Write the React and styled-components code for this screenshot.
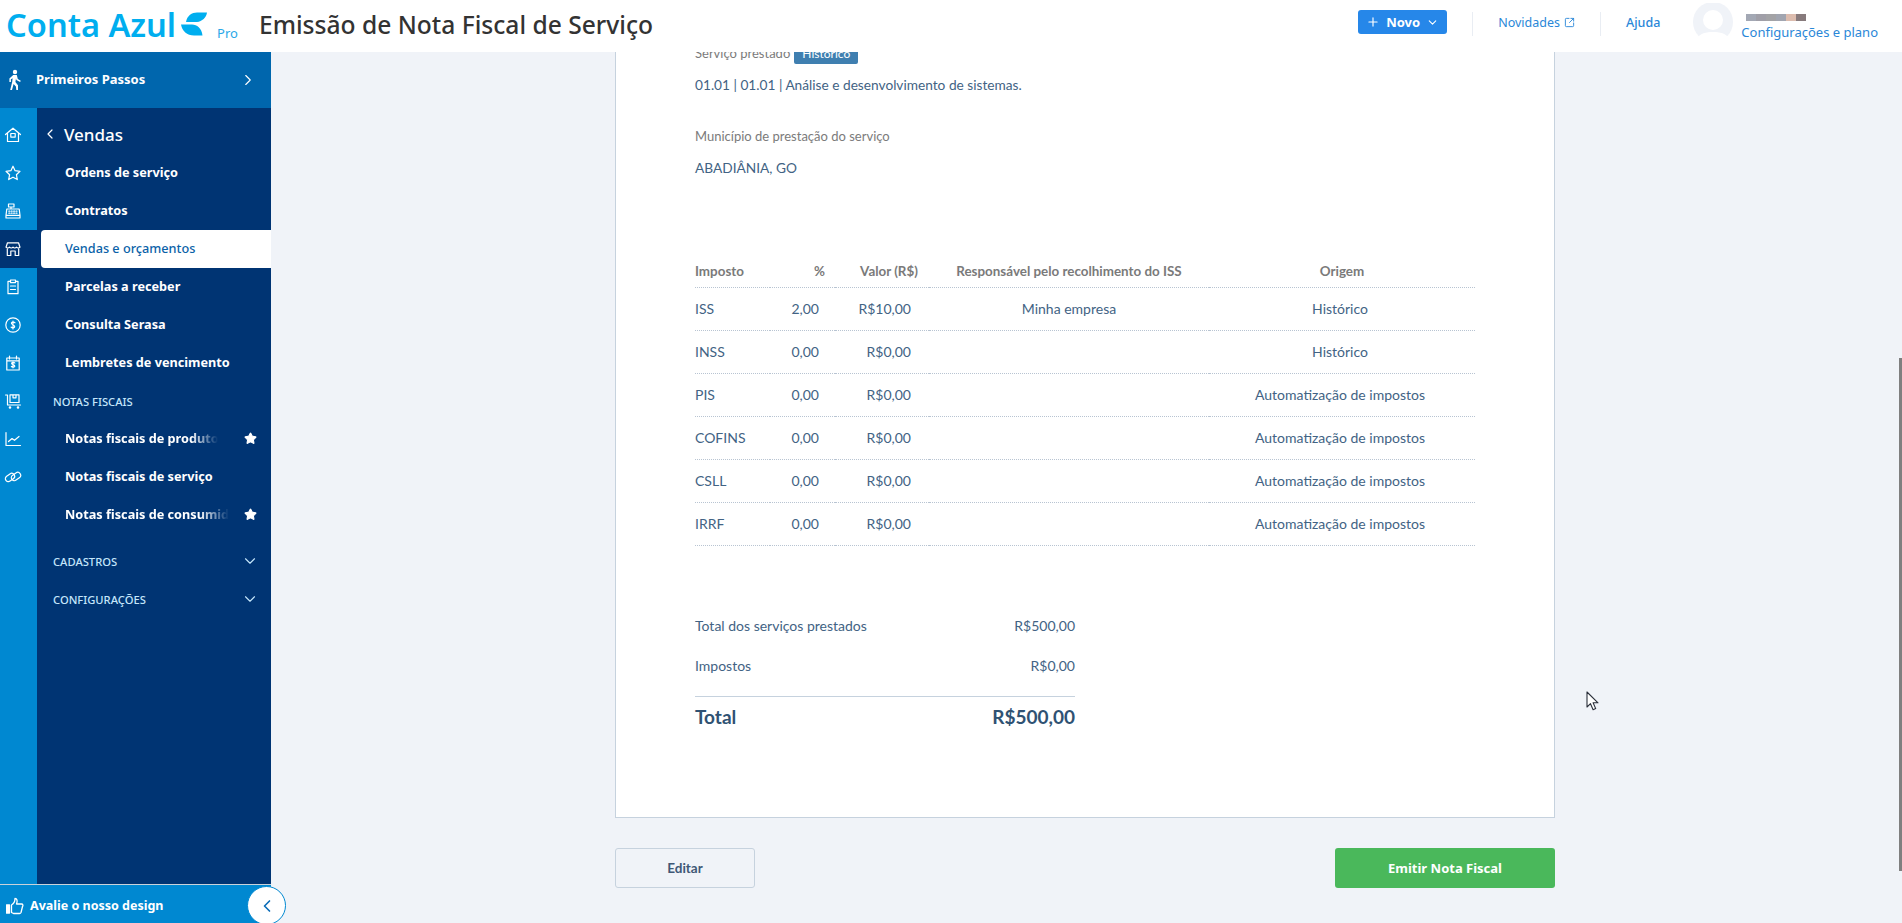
import styled, { createGlobalStyle } from 'styled-components'
import { Plus, ChevronDown, ChevronRight, ChevronLeft, SquareArrowOutUpRight, Star } from 'lucide-react'

const GlobalStyle = createGlobalStyle`
  html, body {
    margin: 0;
    height: 100%;
    overflow: hidden;
  }
  body {
    font-family: "Lato", "Liberation Sans", sans-serif;
    background: #f0f3f8;
  }
  * {
    box-sizing: border-box;
  }
`

const Page = styled.div`
  width: 1902px;
  height: 923px;
  display: flex;
  flex-direction: column;
  position: relative;
  overflow: hidden;
`

const Header = styled.header`
  height: 52px;
  flex: none;
  background: #fff;
  display: flex;
  align-items: center;
  padding: 0 24px 0 6px;
  position: relative;
  z-index: 2;
`

const LogoText = styled.span`
  font-family: "Noto Sans", sans-serif;
  font-size: 32.6px;
  font-weight: 600;
  color: #00aeef;
  margin-top: -4px;
`

const LogoMark = styled.svg`
  width: 26px;
  height: 24px;
  margin: -4px 0 0 5px;
`

const ProTag = styled.span`
  font-family: "Noto Sans", sans-serif;
  font-size: 13px;
  color: #2aa8e8;
  margin: 14px 0 0 10px;
`

const PageTitle = styled.h1`
  margin: -4px 0 0 21px;
  font-family: "Noto Sans", sans-serif;
  font-size: 24.6px;
  font-weight: 500;
  color: #333;
`

const HeaderRight = styled.div`
  margin-left: auto;
  display: flex;
  align-items: center;
  height: 100%;
`

const NewButton = styled.button`
  width: 89px;
  height: 24px;
  margin-bottom: 8px;
  border: 0;
  border-radius: 3px;
  background: #2687e9;
  color: #fff;
  font-family: "Noto Sans", sans-serif;
  font-size: 13px;
  font-weight: 700;
  display: flex;
  align-items: center;
  justify-content: center;
  gap: 6px;
  padding: 0;
`

const Separator = styled.span`
  width: 1px;
  height: 24px;
  background: #e9edf3;
  margin: 0 25px;
  margin-bottom: 4px;
`

const HeaderLink = styled.a`
  font-family: "Noto Sans", sans-serif;
  font-size: 12.5px;
  font-weight: ${p => (p.$bold ? 500 : 400)};
  color: #2a87d8;
  display: flex;
  align-items: center;
  gap: 4px;
  margin-bottom: 8px;
`

const Avatar = styled.svg`
  width: 40px;
  height: 36px;
  margin: 0 8px 10px 33px;
`

const UserBlock = styled.div`
  display: flex;
  flex-direction: column;
  gap: 2px;
  margin-top: 3px;
`

const BlurredName = styled.div`
  display: flex;
  width: 60px;
  height: 7px;
  margin: 0 0 0 5px;
`

const BlurCell = styled.span`
  flex: 1;
  background: ${p => p.$c};
`

const ConfigLink = styled.a`
  font-family: "Noto Sans", sans-serif;
  font-size: 13px;
  color: #2a87d8;
`

const Body = styled.div`
  flex: 1;
  min-height: 0;
  display: flex;
`

const Sidebar = styled.aside`
  width: 271px;
  flex: none;
  display: flex;
  flex-direction: column;
  position: relative;
  z-index: 1;
`

const StartBand = styled.div`
  height: 56px;
  flex: none;
  background: #0066ad;
  display: flex;
  align-items: center;
  padding: 0 14px 0 5px;
  color: #fff;
`

const StartLabel = styled.span`
  margin-left: 11px;
  font-family: "Noto Sans", sans-serif;
  font-size: 13px;
  font-weight: 700;
  flex: 1;
  margin-bottom: 2px;
`

const SideMiddle = styled.div`
  flex: 1;
  min-height: 0;
  display: flex;
`

const Rail = styled.nav`
  width: 37px;
  flex: none;
  background: #0088d1;
  padding-top: 8px;
  display: flex;
  flex-direction: column;
`

const RailItem = styled.div`
  height: 38px;
  display: flex;
  align-items: center;
  justify-content: center;
  padding-right: 11px;
  background: ${p => (p.$active ? '#003473' : 'transparent')};
  color: #fff;
`

const NavPanel = styled.div`
  flex: 1;
  background: #003473;
  padding-top: 8px;
  display: flex;
  flex-direction: column;
`

const NavTitle = styled.div`
  height: 38px;
  display: flex;
  align-items: center;
  gap: 6px;
  padding: 0 0 2px 5px;
  color: #fff;
  font-family: "Noto Sans", sans-serif;
  font-size: 17px;
  font-weight: 500;
`

const NavItem = styled.div`
  height: 38px;
  flex: none;
  display: flex;
  align-items: center;
  justify-content: space-between;
  margin-left: ${p => (p.$active ? '4px' : '0')};
  padding: 0 14px 2px ${p => (p.$active ? '24px' : '28px')};
  border-radius: ${p => (p.$active ? '4px 0 0 4px' : '0')};
  background: ${p => (p.$active ? '#fff' : 'transparent')};
  color: ${p => (p.$active ? '#0a62a8' : '#fff')};
  font-family: "Noto Sans", sans-serif;
  font-size: 12.7px;
  font-weight: ${p => (p.$active ? 500 : 700)};
  white-space: nowrap;
`

const FadedText = styled.span`
  display: block;
  width: ${p => p.$w}px;
  -webkit-mask-image: linear-gradient(to right, #000 82%, transparent 100%);
  mask-image: linear-gradient(to right, #000 82%, transparent 100%);
`

const SectionLabel = styled.div`
  height: 38px;
  flex: none;
  display: flex;
  align-items: center;
  justify-content: space-between;
  padding: 0 12px 0 16px;
  color: #c4e6fb;
  font-family: "Noto Sans", sans-serif;
  font-size: 11.2px;
  font-weight: 500;
  margin-top: ${p => (p.$gap ? '8px' : '0')};
`

const SideFooter = styled.div`
  height: 39px;
  flex: none;
  border-top: 1px solid #c9d2da;
  background: #0088d1;
  color: #fff;
  display: flex;
  align-items: center;
  gap: 6px;
  padding: 3px 0 0 6px;
  font-family: "Noto Sans", sans-serif;
  font-size: 12.5px;
  font-weight: 700;
  position: relative;
`

const CollapseButton = styled.div`
  position: absolute;
  left: 247px;
  top: 1px;
  width: 39px;
  height: 39px;
  border-radius: 50%;
  background: #fff;
  border: 1.5px solid #0088d1;
  color: #0a6cb8;
  display: flex;
  align-items: center;
  justify-content: center;
`

const Main = styled.main`
  flex: 1;
  min-width: 0;
  overflow: hidden;
  padding-left: 344px;
`

const Sheet = styled.section`
  width: 940px;
  height: 775px;
  background: #fff;
  border: 1px solid #c6d2de;
  border-top: 0;
  padding: 0 79px 0 79px;
  color: #426384;
  font-size: 14px;
`

const ServiceLine = styled.div`
  height: 20px;
  margin-top: -9px;
  display: flex;
  align-items: center;
  gap: 4px;
  font-size: 13px;
  color: #7b7b7b;
`

const Badge = styled.span`
  width: 64px;
  height: 21px;
  background: #3f7fb0;
  border-radius: 2px;
  color: #fff;
  font-size: 12px;
  display: flex;
  align-items: center;
  justify-content: center;
`

const Value = styled.p`
  margin: ${p => p.$top}px 0 0;
  font-size: 13.7px;
  line-height: 20px;
`

const FieldLabel = styled.p`
  margin: 31px 0 0;
  font-size: 13px;
  line-height: 20px;
  color: #7b7b7b;
`

const TaxTable = styled.table`
  width: 780px;
  margin-top: 78px;
  border-collapse: collapse;
  table-layout: fixed;
`

const HeadCell = styled.th`
  height: 31px;
  padding: 0 ${p => p.$padR || 0}px 0 ${p => p.$padL || 0}px;
  font-size: 13.4px;
  font-weight: 700;
  color: #7a7a7a;
  text-align: ${p => p.$align || 'center'};
  border-bottom: 1px dotted #b8c4d2;
`

const Cell = styled.td`
  height: 43px;
  padding: 0 ${p => p.$padR || 0}px 0 0;
  text-align: ${p => p.$align || 'center'};
  border-bottom: 1px dotted #b8c4d2;
`

const Totals = styled.div`
  width: 380px;
  margin-top: 60px;
`

const TotalRow = styled.div`
  height: 40px;
  display: flex;
  align-items: center;
  justify-content: space-between;
`

const GrandTotal = styled.div`
  margin-top: 10px;
  height: 41px;
  border-top: 1px solid #c6d2de;
  display: flex;
  align-items: center;
  justify-content: space-between;
  font-size: 19px;
  font-weight: 700;
  color: #2f5273;
`

const Actions = styled.div`
  width: 940px;
  margin-top: 30px;
  display: flex;
  justify-content: space-between;
`

const EditButton = styled.button`
  width: 140px;
  height: 40px;
  background: transparent;
  border: 1px solid #c6d2de;
  border-radius: 3px;
  font-family: "Lato", sans-serif;
  font-size: 13.5px;
  font-weight: 700;
  color: #3f5876;
`

const EmitButton = styled.button`
  width: 220px;
  height: 40px;
  background: #4ab85b;
  border: 0;
  border-radius: 3px;
  font-family: "Noto Sans", sans-serif;
  font-size: 13px;
  font-weight: 700;
  color: #fff;
`

const ScrollThumb = styled.div`
  position: absolute;
  right: 0;
  top: 358px;
  width: 3px;
  height: 513px;
  background: #7f7f7f;
`

const Cursor = styled.svg`
  position: absolute;
  left: 1586px;
  top: 691px;
  width: 13px;
  height: 20px;
`

const Icon = ({ children, size = 18 }) => (
  <svg width={size} height={size} viewBox="0 0 18 18" fill="none" stroke="currentColor" strokeWidth="1.2" strokeLinejoin="round" strokeLinecap="round">
    {children}
  </svg>
)

const railIcons = [
  <Icon key="home"><path d="M1.500 8.500 9 2.200l7.500 6.300M3.500 7.200V15.500h11V7.200" /><rect x="6.800" y="7.500" width="4.400" height="3.600" /></Icon>,
  <Icon key="star"><path d="M9 2.200l2.100 4.500 4.900.6-3.600 3.400.9 4.900L9 13.200l-4.300 2.400.9-4.900L2 7.300l4.900-.6z" /></Icon>,
  <Icon key="register"><path d="M4.500 2h5.500v3H4.500zM7 5v2M2.800 7h12.400l.8 6.300H2zM2 13.300h14V16H2z" /><path d="M4.800 9.200h8.400M4.800 11.200h8.400" strokeDasharray="1 1.400" /></Icon>,
  <Icon key="store"><path d="M3.500 2.800h11L16 7.200a2.300 2.300 0 0 1-3.500 0 2.300 2.300 0 0 1-3.500 0 2.300 2.300 0 0 1-3.500 0A2.300 2.300 0 0 1 2 7.200zM3.300 9v6.500h3.500v-4.500h4.400v4.500h3.500V9" /></Icon>,
  <Icon key="clipboard"><path d="M6.500 3.300H4v12.400h10V3.300h-2.500" /><path d="M6.500 2h5v2.600h-5zM6.500 8h5M6.500 11.500h5" /></Icon>,
  <Icon key="dollar"><circle cx="9" cy="9" r="7.200" /><path d="M11 6.800C10.600 6 8 5.600 7.400 7c-.6 1.800 3.400 1.800 3.300 3.700-.2 1.500-2.900 1.300-3.600.4M9 5v8" /></Icon>,
  <Icon key="calendar"><path d="M2.800 4h12.400v12H2.800zM2.800 6.800h12.400M5.500 2v3M12.500 2v3" /><path d="M10.800 9c-.5-.7-2.900-.9-3.200.3-.3 1.300 3.300 1.300 3.200 2.900-.1 1.200-2.700 1.100-3.400.3M9 7.800v6" /></Icon>,
  <Icon key="cart"><path d="M1.500 3h2v10h13" /><path d="M6 2.800h9v7.700H6zM9 2.800v3h3v-3" /><circle cx="6" cy="15.500" r=".7" /><circle cx="14" cy="15.500" r=".7" /></Icon>,
  <Icon key="chart"><path d="M2 2.500v13h14.500M4.500 11.500l3.500-3 2.500 1.800 4.500-3.800" /></Icon>,
  <Icon key="link">
    <rect x="1" y="6.500" width="10" height="6" rx="3" transform="rotate(-35 6 9.500)" />
    <rect x="7" y="5.500" width="10" height="6" rx="3" transform="rotate(-35 12 8.500)" />
  </Icon>,
]

const taxes = [
  ['ISS', '2,00', 'R$10,00', 'Minha empresa', 'Histórico'],
  ['INSS', '0,00', 'R$0,00', '', 'Histórico'],
  ['PIS', '0,00', 'R$0,00', '', 'Automatização de impostos'],
  ['COFINS', '0,00', 'R$0,00', '', 'Automatização de impostos'],
  ['CSLL', '0,00', 'R$0,00', '', 'Automatização de impostos'],
  ['IRRF', '0,00', 'R$0,00', '', 'Automatização de impostos'],
]

const nameColors = ['#a3a8b4', '#a09fa8', '#a3a3a6', '#a1a5b0', '#dcbcae', '#877a7c']

export default function App() {
  return (
    <Page>
      <GlobalStyle />
      <Header>
        <LogoText>Conta Azul</LogoText>
        <LogoMark viewBox="0 0 26 24">
          <path d="M5 10C6 3.500 11 .5 16 .5h10c-.5 5-5 9-10 9.500z" fill="#00aeef" />
          <path d="M0 12.500h11c5 0 9.500 3.500 10.500 11H13C6 23.500 1 19 0 12.500z" fill="#00aeef" />
        </LogoMark>
        <ProTag>Pro</ProTag>
        <PageTitle>Emissão de Nota Fiscal de Serviço</PageTitle>
        <HeaderRight>
          <NewButton>
            <Plus size={14} strokeWidth={2} />
            Novo
            <ChevronDown size={13} strokeWidth={2} />
          </NewButton>
          <Separator />
          <HeaderLink>
            Novidades
            <SquareArrowOutUpRight size={11} strokeWidth={2} />
          </HeaderLink>
          <Separator />
          <HeaderLink $bold>Ajuda</HeaderLink>
          <Avatar viewBox="0 0 40 36">
            <circle cx="20" cy="19" r="20" fill="#f0f3f8" />
            <circle cx="20" cy="17" r="10" fill="#fff" />
            <path d="M4 36c2-6 10-7 16-7s14 1 16 7z" fill="#fff" />
          </Avatar>
          <UserBlock>
            <BlurredName>
              {nameColors.map(c => <BlurCell key={c} $c={c} />)}
            </BlurredName>
            <ConfigLink>Configurações e plano</ConfigLink>
          </UserBlock>
        </HeaderRight>
      </Header>
      <Body>
        <Sidebar>
          <StartBand>
            <svg width="20" height="22" viewBox="0 0 20 22" fill="#fff">
              <circle cx="10" cy="3" r="2.200" />
              <path d="M8.200 6h3.600l1 4 3 1.800-.7 1.200-3.700-2-.4-1.500-.6 3.600 2.600 3.200V21h-1.700l-.4-3.400-2.300-2.500L7 21H5.200l2-8 .4-3.800-1.700 1V13H4.400V9.500z" />
            </svg>
            <StartLabel>Primeiros Passos</StartLabel>
            <ChevronRight size={18} strokeWidth={1.5} />
          </StartBand>
          <SideMiddle>
            <Rail>
              {railIcons.map((icon, i) => <RailItem key={i} $active={i === 3}>{icon}</RailItem>)}
            </Rail>
            <NavPanel>
              <NavTitle>
                <ChevronLeft size={16} strokeWidth={1.8} />
                Vendas
              </NavTitle>
              <NavItem>Ordens de serviço</NavItem>
              <NavItem>Contratos</NavItem>
              <NavItem $active>Vendas e orçamentos</NavItem>
              <NavItem>Parcelas a receber</NavItem>
              <NavItem>Consulta Serasa</NavItem>
              <NavItem>Lembretes de vencimento</NavItem>
              <SectionLabel>NOTAS FISCAIS</SectionLabel>
              <NavItem>
                <FadedText $w={153}>Notas fiscais de produto</FadedText>
                <Star size={13} fill="#fff" />
              </NavItem>
              <NavItem>Notas fiscais de serviço</NavItem>
              <NavItem>
                <FadedText $w={164}>Notas fiscais de consumidor</FadedText>
                <Star size={13} fill="#fff" />
              </NavItem>
              <SectionLabel $gap>
                CADASTROS
                <ChevronDown size={18} strokeWidth={1.5} />
              </SectionLabel>
              <SectionLabel>
                CONFIGURAÇÕES
                <ChevronDown size={18} strokeWidth={1.5} />
              </SectionLabel>
            </NavPanel>
          </SideMiddle>
          <SideFooter>
            <svg width="18" height="18" viewBox="0 0 18 18" fill="none" stroke="#fff" strokeWidth="1.3" strokeLinejoin="round">
              <rect x="0.500" y="8" width="3" height="8" fill="#fff" />
              <path d="M5.500 8c2.500-1.500 3.500-3.500 3.500-6.500 2 0 2.800 2 1.500 5.500h5c1.500 0 1.800 1.500 1 2.500L15 15.500c-.3.700-1 1-1.500 1H7.500l-2-1z" />
            </svg>
            Avalie o nosso design
            <CollapseButton>
              <ChevronLeft size={20} strokeWidth={2} />
            </CollapseButton>
          </SideFooter>
        </Sidebar>
        <Main>
          <Sheet>
            <ServiceLine>
              Serviço prestado
              <Badge>Histórico</Badge>
            </ServiceLine>
            <Value $top={12}>01.01 | 01.01 | Análise e desenvolvimento de sistemas.</Value>
            <FieldLabel>Município de prestação do serviço</FieldLabel>
            <Value $top={12}>ABADIÂNIA, GO</Value>
            <TaxTable>
              <colgroup>
                <col style={{ width: 75 }} />
                <col style={{ width: 65 }} />
                <col style={{ width: 94 }} />
                <col style={{ width: 280 }} />
                <col style={{ width: 266 }} />
              </colgroup>
              <thead>
                <tr>
                  <HeadCell $align="left">Imposto</HeadCell>
                  <HeadCell $align="right" $padR={10}>%</HeadCell>
                  <HeadCell $padL={14}>Valor (R$)</HeadCell>
                  <HeadCell>Responsável pelo recolhimento do ISS</HeadCell>
                  <HeadCell>Origem</HeadCell>
                </tr>
              </thead>
              <tbody>
                {taxes.map(row => (
                  <tr key={row[0]}>
                    <Cell $align="left">{row[0]}</Cell>
                    <Cell $align="right" $padR={16}>{row[1]}</Cell>
                    <Cell $align="right" $padR={18}>{row[2]}</Cell>
                    <Cell>{row[3]}</Cell>
                    <Cell $padR={4}>{row[4]}</Cell>
                  </tr>
                ))}
              </tbody>
            </TaxTable>
            <Totals>
              <TotalRow><span>Total dos serviços prestados</span><span>R$500,00</span></TotalRow>
              <TotalRow><span>Impostos</span><span>R$0,00</span></TotalRow>
              <GrandTotal><span>Total</span><span>R$500,00</span></GrandTotal>
            </Totals>
          </Sheet>
          <Actions>
            <EditButton>Editar</EditButton>
            <EmitButton>Emitir Nota Fiscal</EmitButton>
          </Actions>
        </Main>
      </Body>
      <ScrollThumb />
      <Cursor viewBox="0 0 13 20">
        <path d="M1 1v15l3.500-3.300 2.600 6 2.600-1.100-2.600-5.800H12z" fill="#fff" stroke="#2a2f3a" strokeWidth="1.100" strokeLinejoin="round" />
      </Cursor>
    </Page>
  )
}
